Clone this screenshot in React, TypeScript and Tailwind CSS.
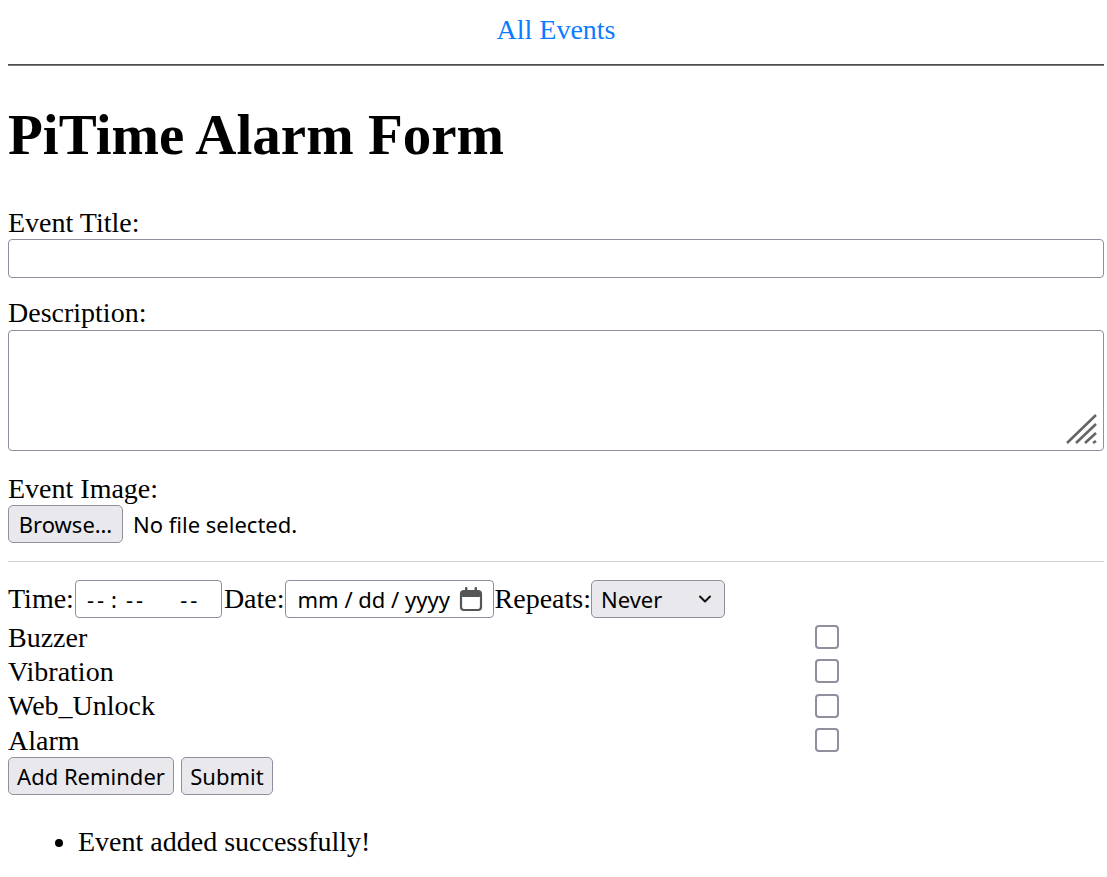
import React from "react";

const ctl = "font-['Noto_Sans',sans-serif] text-[22px]";

function Checkbox() {
  return <div className="w-[24px] h-[24px] rounded-[4px] border-2 border-[#8f8f9d] bg-white" />;
}

function CalendarIcon() {
  return (
    <svg width="24" height="26" viewBox="0 0 24 26" fill="none">
      <rect x="2" y="5" width="20" height="19" rx="3" stroke="#555" strokeWidth="2.2" />
      <rect x="2" y="5" width="20" height="6" rx="2" fill="#555" />
      <rect x="6" y="1" width="2.4" height="6" rx="1" fill="#555" />
      <rect x="15.6" y="1" width="2.4" height="6" rx="1" fill="#555" />
    </svg>
  );
}

function Chevron() {
  return (
    <svg width="14" height="10" viewBox="0 0 14 10" fill="none">
      <path d="M2 2.5 L7 7.5 L12 2.5" stroke="#111" strokeWidth="2" strokeLinecap="round" strokeLinejoin="round" />
    </svg>
  );
}

function Grip() {
  return (
    <svg width="34" height="32" viewBox="0 0 34 32" className="absolute right-[4px] bottom-[5px]">
      <line x1="2" y1="30" x2="31" y2="2" stroke="#666" strokeWidth="2.6" />
      <line x1="11" y1="30" x2="31" y2="11" stroke="#666" strokeWidth="2.6" />
      <line x1="20" y1="30" x2="31" y2="20" stroke="#666" strokeWidth="2.6" />
      <line x1="28" y1="30" x2="31" y2="28" stroke="#666" strokeWidth="2.6" />
    </svg>
  );
}

export default function App() {
  const flags = ["Buzzer", "Vibration", "Web_Unlock", "Alarm"];
  const heights = ["h-[34px]", "h-[34px]", "h-[35px]", "h-[34px]"];
  return (
    <div className="w-[1107px] min-h-[877px] bg-white text-black font-['Liberation_Serif','Times_New_Roman',serif] text-[28px] leading-[32px]">
      <div className="ml-[8px] w-[1096px]">
        <nav className="pt-[14px] text-center">
          <a className="text-[#0a7dff]">All Events</a>
        </nav>
        <div className="mt-[18px] h-[2px] border-t border-[#4d4d4d] bg-[#7a7a7a]" />
        <h1 className="mt-[37px] text-[57px] leading-[64px] font-bold">PiTime Alarm Form</h1>

        <div className="mt-[40px]">Event Title:</div>
        <div className="h-[39px] rounded-[4px] border border-[#8f8f9d] bg-white" />

        <div className="mt-[19px]">Description:</div>
        <div className="relative mt-[1px] h-[121px] rounded-[4px] border border-[#8f8f9d] bg-white">
          <Grip />
        </div>

        <div className="mt-[22px]">Event Image:</div>
        <div className={`flex items-center h-[38px] ${ctl}`}>
          <div className="flex items-center justify-center w-[115px] h-[38px] rounded-[5px] border border-[#8f8f9d] bg-[#e9e9ed]">
            Browse…
          </div>
          <span className="ml-[10px]">No file selected.</span>
        </div>

        <div className="mt-[18px] h-[1px] bg-[#d0d0d0]" />

        <div className="mt-[18px] flex items-center h-[38px]">
          <span>Time:</span>
          <div className={`ml-[1px] flex items-center w-[147px] h-[38px] rounded-[4px] border border-[#8f8f9d] bg-white ${ctl}`}>
            <span className="ml-[11px] tracking-[3px]">--</span>
            <span className="ml-[4px]">:</span>
            <span className="ml-[9px] tracking-[3px]">--</span>
            <span className="ml-[34px] tracking-[3px]">--</span>
          </div>
          <span className="ml-[2px]">Date:</span>
          <div className={`flex items-center justify-between w-[209px] h-[38px] rounded-[4px] border border-[#8f8f9d] bg-white pl-[12px] pr-[10px] ${ctl}`}>
            <span className="whitespace-pre">mm / dd / yyyy</span>
            <CalendarIcon />
          </div>
          <span className="ml-[1px]">Repeats:</span>
          <div className={`flex items-center justify-between w-[134px] h-[38px] rounded-[5px] border border-[#8f8f9d] bg-[#e9e9ed] pl-[9px] pr-[12px] ${ctl}`}>
            <span>Never</span>
            <Chevron />
          </div>
        </div>

        <div className="mt-[2px]">
          {flags.map((f, i) => (
            <div key={f} className={`grid grid-cols-[807px_24px] items-center ${heights[i]}`}>
              <span className="pt-[1px]">{f}</span>
              <Checkbox />
            </div>
          ))}
        </div>

        <div className={`flex items-center gap-[7px] ${ctl}`}>
          <div className="flex items-center justify-center w-[166px] h-[38px] rounded-[5px] border border-[#8f8f9d] bg-[#e9e9ed]">
            Add Reminder
          </div>
          <div className="flex items-center justify-center w-[92px] h-[38px] rounded-[5px] border border-[#8f8f9d] bg-[#e9e9ed]">
            Submit
          </div>
        </div>

        <ul className="mt-[31px] pl-[70px] list-disc">
          <li>Event added successfully!</li>
        </ul>
      </div>
    </div>
  );
}
